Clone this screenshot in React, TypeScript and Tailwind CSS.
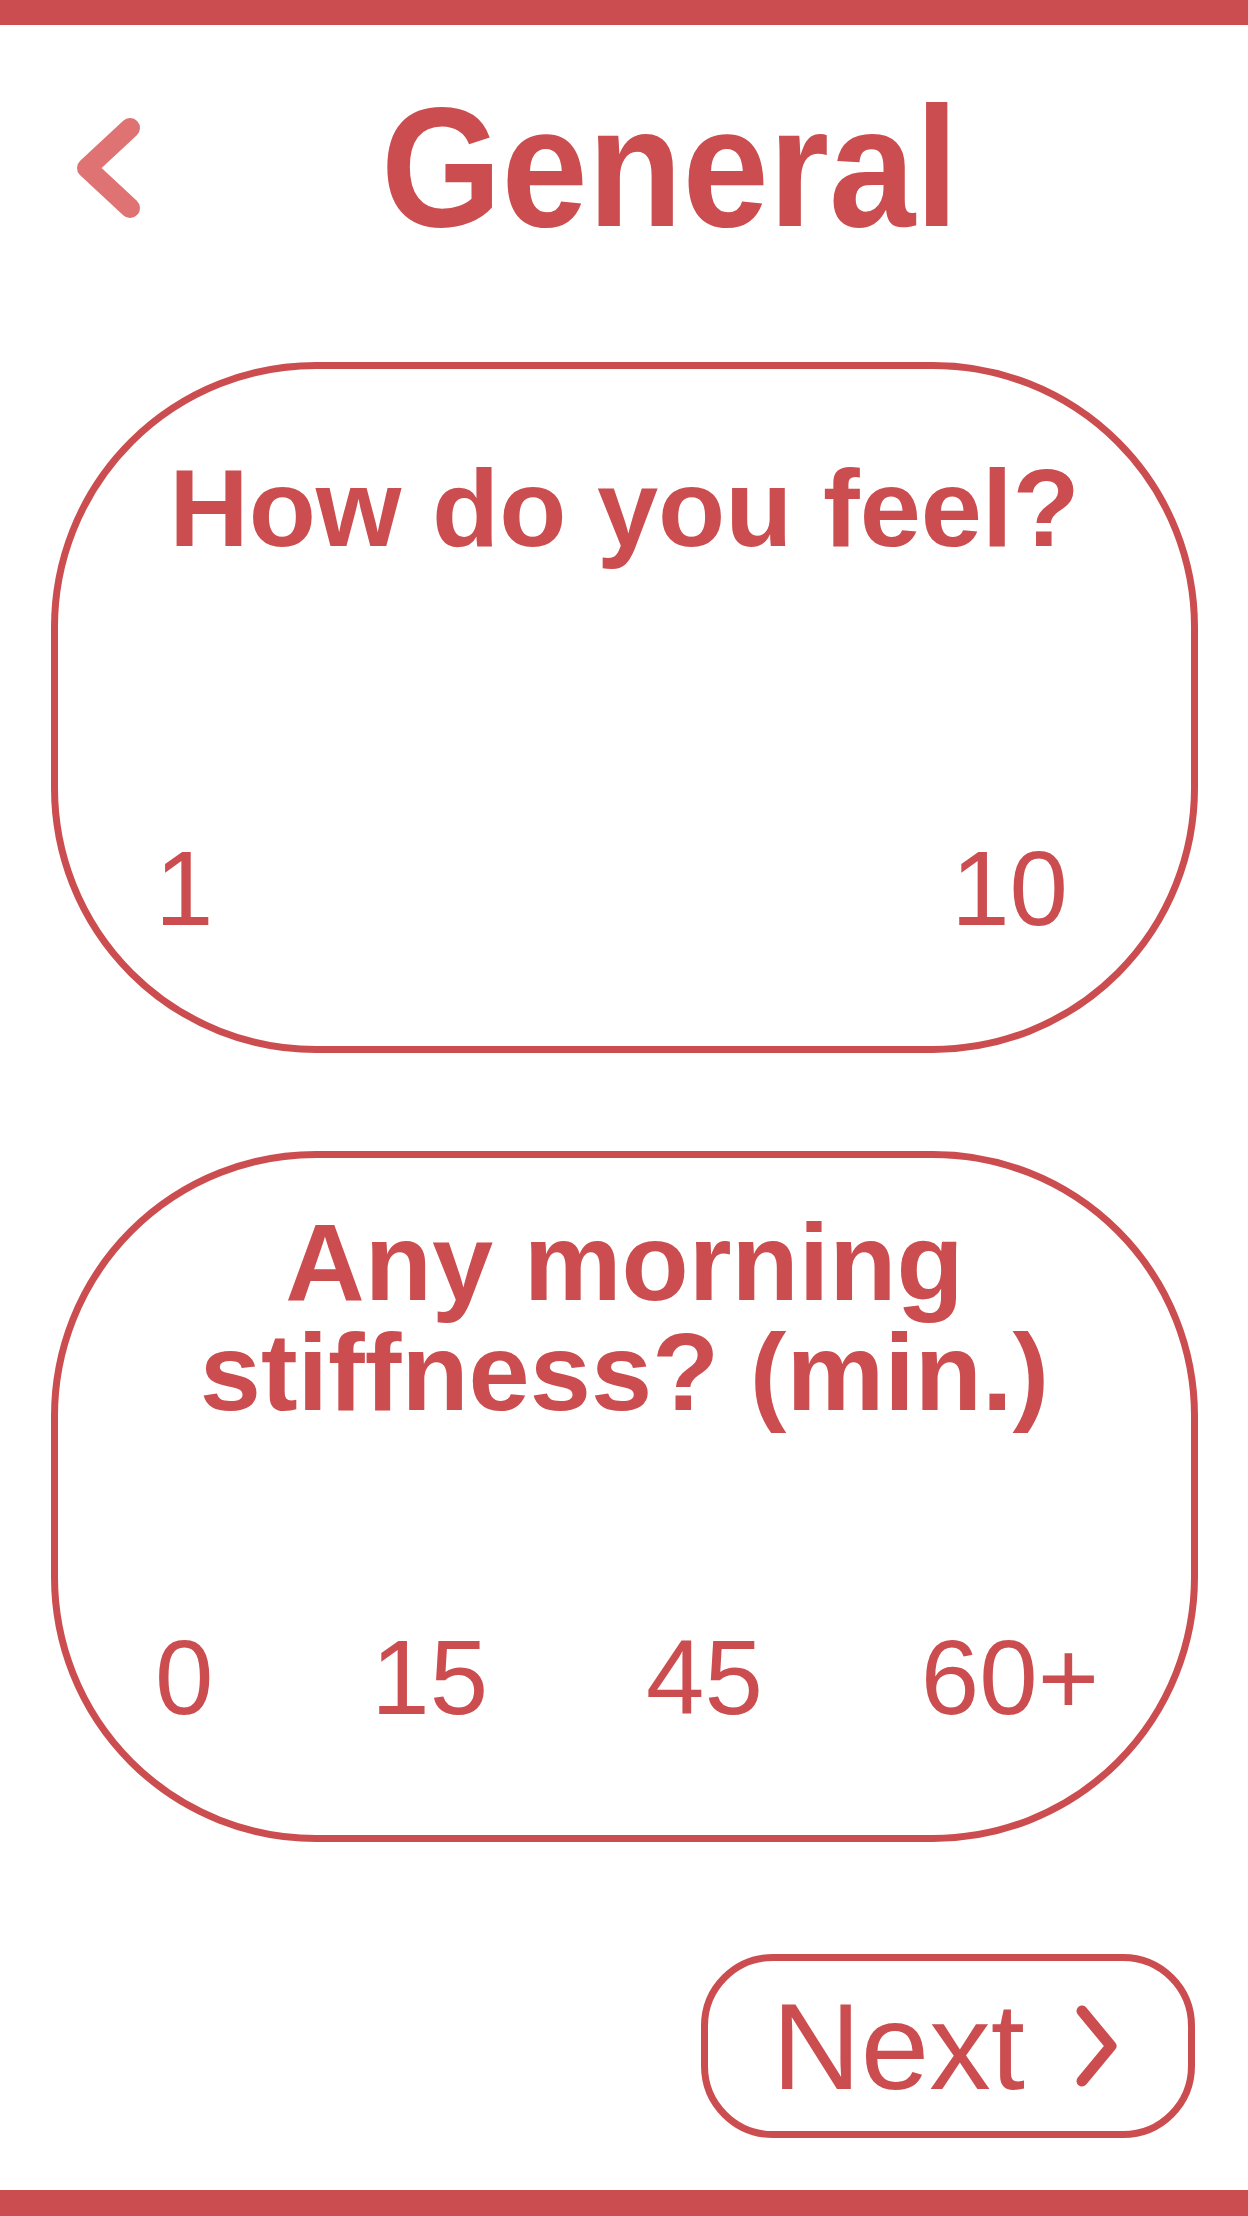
import { ReactNode } from 'react';

const FONT = "font-['Liberation_Sans',Arial,sans-serif]";

function BackChevron() {
    return (
        <svg width="90" height="120" viewBox="0 0 90 120" fill="none" aria-hidden>
            <polyline
                points="70,20 27,60 70,100"
                stroke="#df7272"
                strokeWidth="20"
                strokeLinecap="round"
                strokeLinejoin="round"
            />
        </svg>
    );
}

function NextChevron() {
    return (
        <svg width="55" height="90" viewBox="0 0 55 90" fill="none" aria-hidden>
            <polyline
                points="13,10 42,45 13,80"
                stroke="#cc4d4f"
                strokeWidth="11"
                strokeLinecap="round"
                strokeLinejoin="round"
            />
        </svg>
    );
}

interface QuestionCardProps {
    title: ReactNode;
    labels: string[];
    titleClass: string;
    rowClass: string;
}

function QuestionCard({ title, labels, titleClass, rowClass }: QuestionCardProps) {
    return (
        <div className="flex h-[691px] flex-col rounded-[265px] border-[7px] border-[#cc4d4f]">
            <h2 className={`px-16 text-center text-[110px] font-bold leading-none ${titleClass}`}>
                {title}
            </h2>
            <div className={`mt-auto mb-[105px] flex justify-between text-[105px] leading-none ${rowClass}`}>
                {labels.map((label) => (
                    <span key={label}>{label}</span>
                ))}
            </div>
        </div>
    );
}

export default function App() {
    return (
        <div className={`flex min-h-screen flex-col bg-white text-[#cc4d4f] ${FONT}`}>
            <div className="h-[25px] bg-[#cc4d4f]" />

            {/* Header */}
            <header className="mt-[65px] flex h-[155px] items-center pl-[60px]">
                <button className="shrink-0" aria-label="Back">
                    <BackChevron />
                </button>
                <h1 className="ml-[231px] scale-y-110 text-[155px] font-bold leading-none">General</h1>
            </header>

            <main className="mt-[117px] flex flex-col pl-[51px] pr-[50px]">
                <QuestionCard
                    title="How do you feel?"
                    labels={['1', '10']}
                    titleClass="mt-[84px]"
                    rowClass="pl-[97px] pr-[123px]"
                />

                <div className="mt-[98px]">
                    <QuestionCard
                        title="Any morning stiffness? (min.)"
                        labels={['0', '15', '45', '60+']}
                        titleClass="mt-[49px]"
                        rowClass="pl-[97px] pr-[92px]"
                    />
                </div>

                <button className="mt-[112px] mr-[3px] flex h-[184px] w-[494px] items-center justify-center gap-[44px] self-end rounded-[72px] border-[7px] border-[#cc4d4f]">
                    <span className="text-[123px] leading-none">Next</span>
                    <NextChevron />
                </button>
            </main>

            <div className="mt-auto h-[26px] bg-[#cc4d4f]" />
        </div>
    );
}
